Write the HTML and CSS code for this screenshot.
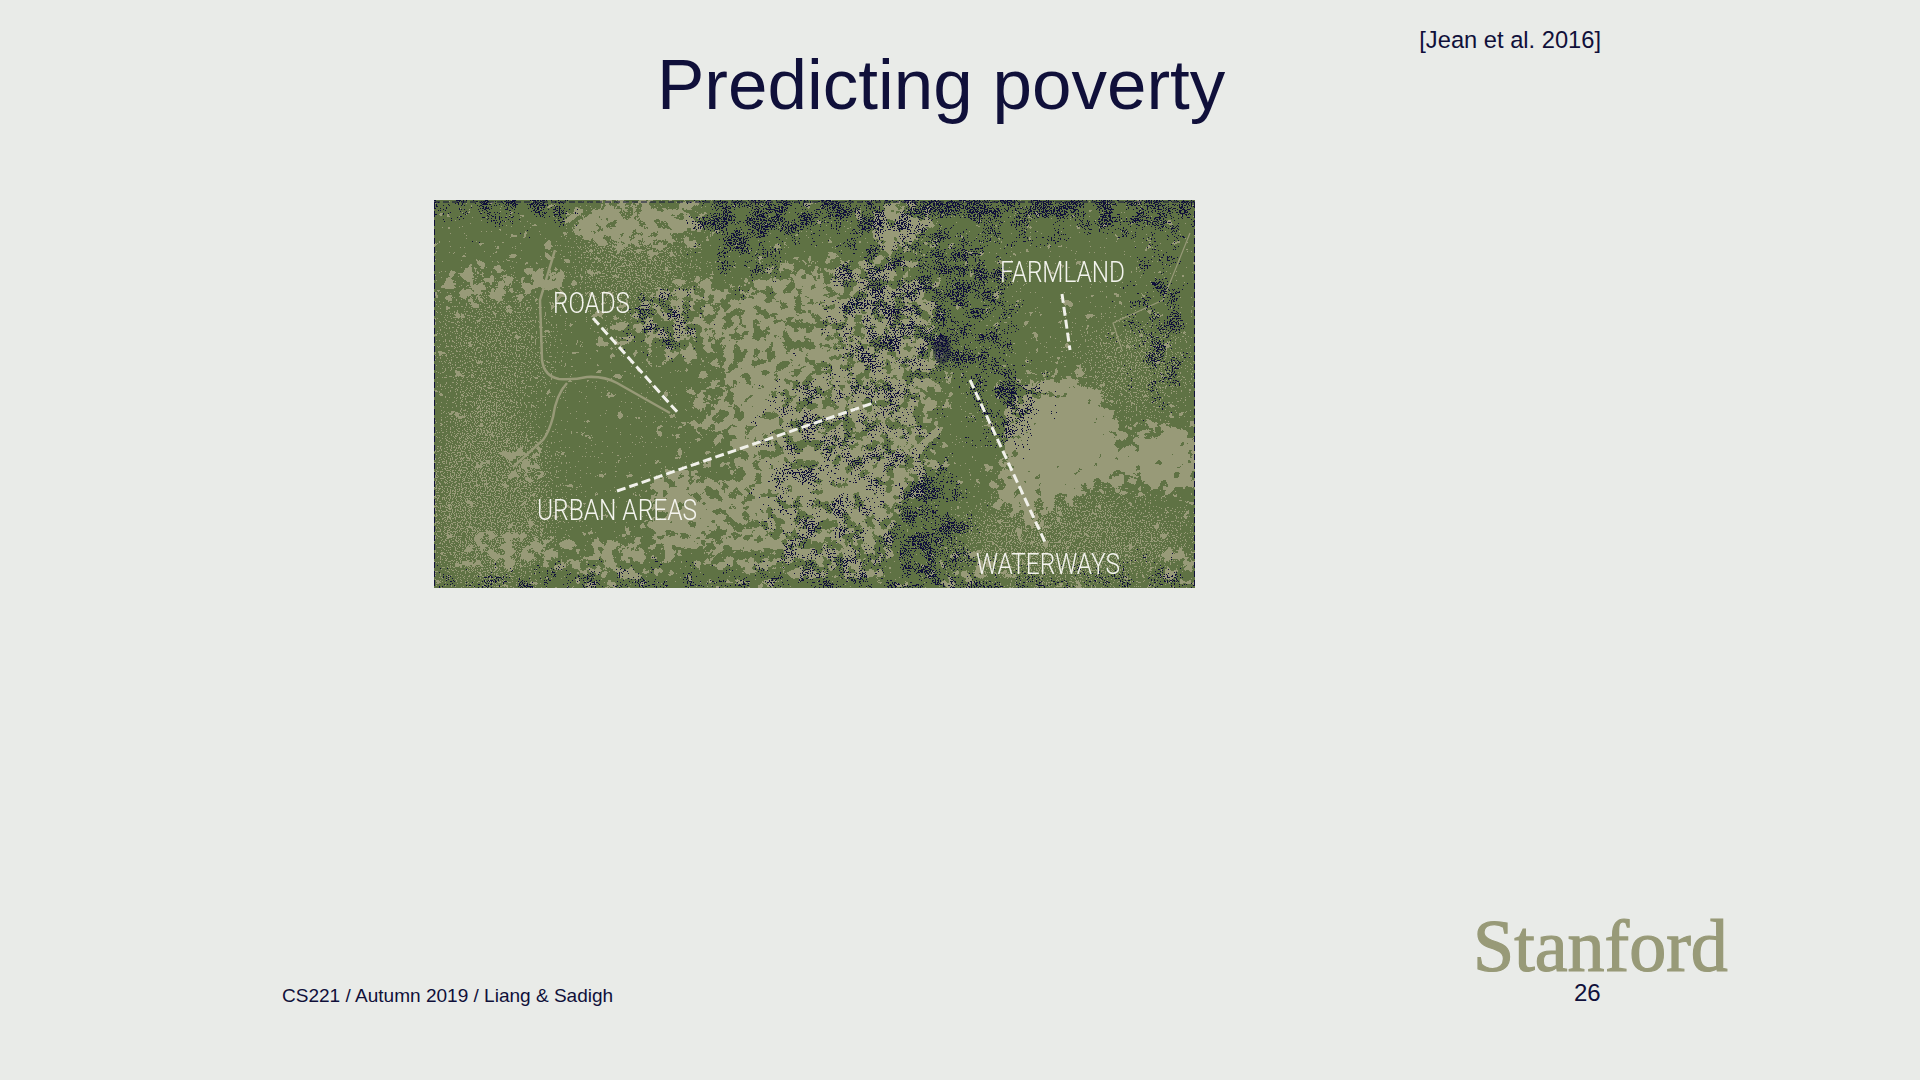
FILE: index.html
```html
<!DOCTYPE html>
<html lang="en">
<head>
<meta charset="utf-8">
<title>Predicting poverty</title>
<link rel="stylesheet" href="styles.css">
</head>
<body>
<main class="slide">
  <header class="head">
    <h1 class="title">Predicting poverty</h1>
    <p class="cite">[Jean et al. 2016]</p>
  </header>
  <figure class="figure">
    <svg class="map" viewBox="0 0 761 388" width="761" height="388" role="img" aria-label="Satellite image with labelled roads, farmland, urban areas and waterways">
      <defs>
        <filter id="land" x="0" y="0" width="1" height="1" filterUnits="objectBoundingBox" color-interpolation-filters="sRGB">
          <feGaussianBlur in="SourceAlpha" stdDeviation="11" result="d"/>
          <feTurbulence type="fractalNoise" baseFrequency=".1" numOctaves="5" seed="11"/>
          <feColorMatrix values="0 0 0 0 0  0 0 0 0 0  0 0 0 0 0  2 0 0 0 -.5" result="n"/>
          <feComposite in="d" in2="n" operator="arithmetic" k1="0" k2="1" k3="1" k4="-.5"/>
          <feComponentTransfer result="t"><feFuncA type="discrete" tableValues="0 1"/></feComponentTransfer>
          <feFlood flood-color="#989a78"/>
          <feComposite in2="t" operator="in"/>
        </filter>
        <filter id="fine" x="0" y="0" width="1" height="1" filterUnits="objectBoundingBox" color-interpolation-filters="sRGB">
          <feGaussianBlur in="SourceAlpha" stdDeviation="16" result="d"/>
          <feTurbulence type="fractalNoise" baseFrequency=".8" numOctaves="1" seed="3"/>
          <feColorMatrix values="0 0 0 0 0  0 0 0 0 0  0 0 0 0 0  2.2 0 0 0 -.6" result="n"/>
          <feComposite in="d" in2="n" operator="arithmetic" k1="0" k2="1" k3="1" k4="-.5"/>
          <feComponentTransfer result="t"><feFuncA type="discrete" tableValues="0 1"/></feComponentTransfer>
          <feFlood flood-color="#989a78"/>
          <feComposite in2="t" operator="in"/>
        </filter>
        <filter id="dots" x="0" y="0" width="1" height="1" filterUnits="objectBoundingBox" color-interpolation-filters="sRGB">
          <feGaussianBlur in="SourceAlpha" stdDeviation="12" result="d"/>
          <feTurbulence type="fractalNoise" baseFrequency=".06" numOctaves="3" seed="21"/>
          <feColorMatrix values="0 0 0 0 0  0 0 0 0 0  0 0 0 0 0  2.4 0 0 0 -.7" result="low"/>
          <feComposite in="d" in2="low" operator="arithmetic" k1="1" k2=".5" k3="0" k4="0" result="m"/>
          <feTurbulence type="fractalNoise" baseFrequency=".75" numOctaves="1" seed="8"/>
          <feColorMatrix values="0 0 0 0 0  0 0 0 0 0  0 0 0 0 0  2.4 0 0 0 -.7" result="n"/>
          <feComposite in="m" in2="n" operator="arithmetic" k1="0" k2="1" k3="1" k4="-1"/>
          <feComponentTransfer result="t"><feFuncA type="discrete" tableValues="0 1"/></feComponentTransfer>
          <feFlood flood-color="#10103a"/>
          <feComposite in2="t" operator="in"/>
        </filter>
      </defs>
      <rect class="ground" width="761" height="388"/>

      <g filter="url(#fine)">
        <rect width="761" height="388" fill="none"/>
        <ellipse cx="55" cy="300" rx="70" ry="95" opacity=".4"/>
        <ellipse cx="60" cy="150" rx="60" ry="70" opacity=".3"/>
        <ellipse cx="640" cy="340" rx="120" ry="50" opacity=".38"/>
        <ellipse cx="700" cy="170" rx="55" ry="50" opacity=".32"/>
        <ellipse cx="200" cy="60" rx="60" ry="50" opacity=".36"/>
      </g>

      <g filter="url(#land)">
        <rect width="761" height="388" fill="none"/>
        <!-- central reticulated settlement -->
        <rect x="300" y="60" width="205" height="250" rx="60" opacity=".6"/>
        <rect x="270" y="270" width="190" height="110" rx="40" opacity=".56"/>
        <ellipse cx="260" cy="120" rx="50" ry="50" opacity=".5"/>
        <ellipse cx="300" cy="210" rx="50" ry="40" opacity=".48"/>
        <ellipse cx="200" cy="25" rx="75" ry="26" opacity=".72"/>
        <ellipse cx="465" cy="28" rx="32" ry="24" opacity=".85"/>
        <ellipse cx="245" cy="310" rx="32" ry="42" opacity=".85"/>
        <ellipse cx="185" cy="130" rx="22" ry="20" opacity=".62"/>
        <!-- big pale patches on the right -->
        <ellipse cx="628" cy="235" rx="55" ry="58"/>
        <ellipse cx="595" cy="285" rx="32" ry="40" opacity=".85"/>
        <ellipse cx="733" cy="258" rx="36" ry="34"/>
        <ellipse cx="682" cy="265" rx="26" ry="24" opacity=".9"/>
        <!-- left side and bottom -->
        <ellipse cx="48" cy="85" rx="42" ry="20" opacity=".6"/>
        <ellipse cx="112" cy="78" rx="30" ry="22" opacity=".58"/>
        <ellipse cx="85" cy="350" rx="55" ry="22" opacity=".55"/>
        <ellipse cx="185" cy="362" rx="48" ry="24" opacity=".6"/>
        <ellipse cx="85" cy="265" rx="22" ry="22" opacity=".58"/>
        <ellipse cx="540" cy="370" rx="40" ry="16" opacity=".45"/>
        <ellipse cx="745" cy="360" rx="20" ry="28" opacity=".5"/>
      </g>

      <g class="roads">
        <path d="M121 50 106 100 108 160Q110 176 125 179 140 180 153 177 170 176 183 183L236 213"/>
        <path d="M133 183Q122 195 119 217 115 232 109 240L79 267"/>
        <path class="thin" d="M756 33 729 100 679 123 688 150"/>
      </g>

      <g filter="url(#dots)">
        <rect width="761" height="388" fill="none"/>
        <rect x="-30" y="-30" width="170" height="50" opacity=".72"/>
        <rect x="260" y="-30" width="530" height="62" opacity=".8"/>
        <rect x="400" y="40" width="180" height="130" rx="40" opacity=".68"/>
        <ellipse cx="232" cy="122" rx="36" ry="30" opacity=".68"/>
        <ellipse cx="310" cy="50" rx="40" ry="30" opacity=".6"/>
        <ellipse cx="505" cy="335" rx="30" ry="65" opacity=".72"/>
        <ellipse cx="570" cy="205" rx="40" ry="45" opacity=".6"/>
        <ellipse cx="725" cy="125" rx="30" ry="80" opacity=".56"/>
        <rect x="-30" y="372" width="820" height="40" opacity=".62"/>
        <rect x="330" y="170" width="170" height="200" rx="40" opacity=".46"/>
        <rect width="761" height="388" opacity=".32"/>
      </g>
      <ellipse class="lake" cx="508" cy="150" rx="9" ry="14"/>
      <path class="edge" d="M0 2H761M.5 2V388M760.5 2V388"/>

      <g class="dashes">
        <path d="M159 118 245 214"/>
        <path d="M183 291 442 202"/>
        <path d="M628 94 636 150"/>
        <path d="M536 180 611 342"/>
      </g>
      <g class="labels">
        <text x="119" y="113" textLength="77" lengthAdjust="spacingAndGlyphs">ROADS</text>
        <text x="103" y="320" textLength="160" lengthAdjust="spacingAndGlyphs">URBAN AREAS</text>
        <text x="566" y="82" textLength="125" lengthAdjust="spacingAndGlyphs">FARMLAND</text>
        <text x="542" y="374" textLength="144" lengthAdjust="spacingAndGlyphs">WATERWAYS</text>
      </g>
    </svg>
  </figure>
  <footer class="foot">
    <p class="course">CS221 / Autumn 2019 / Liang &amp; Sadigh</p>
    <div class="brand">
      <span class="logo">Stanford</span>
      <span class="page">26</span>
    </div>
  </footer>
</main>
</body>
</html>
```
FILE: styles.css
```css
* { box-sizing: border-box; }
html, body { margin: 0; height: 100%; }
body {
  background: #e9ebe8;
  color: #10103a;
  font-family: "Liberation Sans", Arial, sans-serif;
  overflow: hidden;
}
.slide {
  height: 1080px;
  display: flex;
  flex-direction: column;
}
.head {
  display: flex;
  align-items: flex-start;
  padding-left: 657px;
  padding-top: 46px;
}
.title {
  margin: 0;
  font-size: 71px;
  font-weight: 400;
  line-height: 78px;
  white-space: nowrap;
}
.cite {
  margin: -20px 0 0 194px;
  font-size: 23.7px;
  line-height: 28px;
  white-space: nowrap;
}
.figure {
  margin: 76px 0 0 434px;
  width: 761px;
  height: 388px;
}
.map { display: block; }
.ground { fill: #5f7244; }
.roads path { fill: none; stroke: #989a78; stroke-width: 2.5; }
.roads .thin { stroke-width: 1.2; }
.lake { fill: #10103a; opacity: .4; }
.edge { fill: none; stroke: #10103a; stroke-width: 1; stroke-dasharray: 6 3; }
.dashes path {
  fill: none;
  stroke: #f1f1ea;
  stroke-width: 3;
  stroke-dasharray: 9 4;
}
.labels text {
  fill: #f4f4ee;
  font-family: Roboto, "Liberation Sans", sans-serif;
  font-size: 29px;
  font-weight: 300;
}
.foot {
  display: flex;
  align-items: flex-start;
  justify-content: space-between;
  margin-top: 326px;
  padding-left: 282px;
  padding-right: 192px;
}
.course {
  margin: 70px 0 0;
  font-size: 19.05px;
  line-height: 24px;
  white-space: nowrap;
}
.brand {
  display: flex;
  flex-direction: column;
  width: 255px;
}
.logo {
  color: #989a78;
  font-family: "Liberation Serif", "Times New Roman", serif;
  font-size: 74px;
  line-height: 64px;
  -webkit-text-stroke: 1.2px #989a78;
}
.page {
  margin: 1px 0 0 101px;
  font-size: 24px;
  line-height: 28px;
}
```
